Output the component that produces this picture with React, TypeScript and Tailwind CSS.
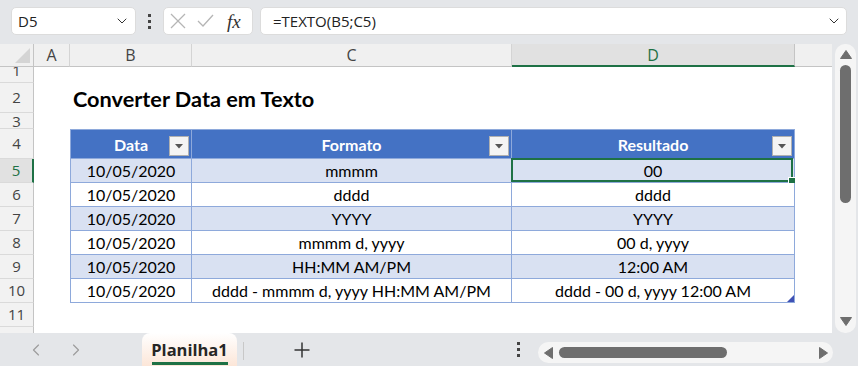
import { ChevronDown, ChevronLeft, ChevronRight } from "lucide-react";

// Planilha: converter data em texto
const dados = [
  ["10/05/2020", "mmmm", "00"],
  ["10/05/2020", "dddd", "dddd"],
  ["10/05/2020", "YYYY", "YYYY"],
  ["10/05/2020", "mmmm d, yyyy", "00 d, yyyy"],
  ["10/05/2020", "HH:MM AM/PM", "12:00 AM"],
  ["10/05/2020", "dddd - mmmm d, yyyy HH:MM AM/PM", "dddd - 00 d, yyyy 12:00 AM"],
];

function VDots() {
  return (
    <div className="flex flex-col gap-[3px]">
      <span className="w-[3px] h-[3px] bg-[#444]" />
      <span className="w-[3px] h-[3px] bg-[#444]" />
      <span className="w-[3px] h-[3px] bg-[#444]" />
    </div>
  );
}

function FormulaBar() {
  return (
    <div className="h-[44px] flex items-start pt-[7px]">
      <div className="ml-[11px] w-[125px] h-[28px] bg-white rounded-[5px] border border-[#dcdcdc] flex items-center justify-between pl-[6px] pr-[5px]">
        <span className="text-[15px] text-[#222]">D5</span>
        <ChevronDown size={16} strokeWidth={1.5} className="text-[#333]" />
      </div>
      <div className="w-[27px] h-[28px] flex items-center justify-center">
        <VDots />
      </div>
      <div className="w-[90px] h-[28px] bg-white rounded-[5px] border border-[#dcdcdc] flex items-center">
        <svg width="16" height="16" className="ml-[6px]">
          <line x1="1" y1="1" x2="15" y2="15" stroke="#b5b5b5" strokeWidth="1.3" />
          <line x1="15" y1="1" x2="1" y2="15" stroke="#b5b5b5" strokeWidth="1.3" />
        </svg>
        <svg width="17" height="14" className="ml-[11px]">
          <polyline points="1,7 6,12 16,1" fill="none" stroke="#b5b5b5" strokeWidth="1.3" />
        </svg>
        <span className="ml-[13px] font-['Liberation_Serif',serif] italic text-[19px] text-[#333] leading-none">fx</span>
      </div>
      <div className="ml-[7px] w-[587px] h-[28px] bg-white rounded-[5px] border border-[#dcdcdc] flex items-center justify-between pl-[12px] pr-[4px]">
        <span className="text-[15px] text-[#222]">=TEXTO(B5;C5)</span>
        <ChevronDown size={16} strokeWidth={1.5} className="text-[#333]" />
      </div>
    </div>
  );
}

function ColHeaders() {
  return (
    <div className="flex h-[23px] bg-[#f0f0f0] text-[16px] text-[#444]">
      <div className="w-[34px] relative border-r border-b border-[#c4c4c4]">
        <svg width="34" height="22" className="absolute left-0 top-0">
          <polygon points="15,19 30,4 30,19" fill="#d4d4d4" />
        </svg>
      </div>
      <div className="w-[36px] flex items-center justify-center border-r border-b border-r-[#d4d4d4] border-b-[#c4c4c4]">A</div>
      <div className="w-[122px] flex items-center justify-center border-r border-b border-r-[#d4d4d4] border-b-[#c4c4c4]">B</div>
      <div className="w-[320px] flex items-center justify-center border-r border-b border-r-[#d4d4d4] border-b-[#c4c4c4]">C</div>
      <div className="w-[283px] flex items-center justify-center bg-[#e1e1e1] text-[#1e7145] border-r border-r-[#c4c4c4] border-b-2 border-b-[#1e7145]">D</div>
      <div className="flex-1 border-b border-[#c4c4c4]" />
    </div>
  );
}

function RowHead({ n, h, sel, label }: { n?: number; h: string; sel?: boolean; label?: string }) {
  return (
    <div
      className={
        "w-[34px] shrink-0 overflow-hidden flex justify-center text-[15px] border-b border-b-[#dadada] " +
        h +
        " " +
        (label ?? "items-center") +
        (sel ? " bg-[#e1e1e1] text-[#1e7145] border-r-2 border-r-[#1e7145]" : " bg-[#f2f2f2] text-[#444] border-r border-r-[#c4c4c4]")
      }
    >
      {n}
    </div>
  );
}

function FilterBtn() {
  return (
    <div className="absolute right-[2px] bottom-[2px] w-[20px] h-[20px] bg-[#f4f4f4] border border-[#b0b0b0] flex items-center justify-center">
      <svg width="8" height="5">
        <polygon points="0,0 8,0 4,4.5" fill="#555" />
      </svg>
    </div>
  );
}

function Sheet() {
  return (
    <div className="w-[832px] bg-white flex flex-col overflow-hidden font-['Lato',sans-serif]">
      <div className="font-['Open_Sans',sans-serif]">
        <ColHeaders />
      </div>
      {/* linha 1 */}
      <div className="flex h-[16px] font-['Open_Sans',sans-serif]">
        <RowHead n={1} h="h-[16px]" label="items-start leading-[7px]" />
      </div>
      {/* linha 2: titulo */}
      <div className="flex h-[30px]">
        <div className="font-['Open_Sans',sans-serif]">
          <RowHead n={2} h="h-[30px]" />
        </div>
        <div className="w-[36px]" />
        <div className="pl-[3px] flex items-center pt-[2px] whitespace-nowrap text-[21.7px] font-bold text-black">
          Converter Data em Texto
        </div>
      </div>
      {/* linha 3 */}
      <div className="flex h-[16px] font-['Open_Sans',sans-serif]">
        <RowHead n={3} h="h-[16px]" label="items-center leading-[12px]" />
      </div>
      {/* linha 4: cabecalho da tabela */}
      <div className="flex h-[30px] text-[16px] font-bold text-white">
        <div className="font-['Open_Sans',sans-serif] font-normal">
          <RowHead n={4} h="h-[30px]" />
        </div>
        <div className="w-[36px]" />
        <div className="w-[122px] relative bg-[#4472c4] border border-[#8ea9db] flex items-center justify-center pt-[2px]">
          Data
          <FilterBtn />
        </div>
        <div className="w-[320px] relative bg-[#4472c4] border-y border-r border-[#8ea9db] flex items-center justify-center pt-[2px]">
          Formato
          <FilterBtn />
        </div>
        <div className="w-[283px] relative bg-[#4472c4] border-y border-r border-[#8ea9db] flex items-center justify-center pt-[2px]">
          Resultado
          <FilterBtn />
        </div>
      </div>
      {/* linhas 5 a 10 */}
      {dados.map((r, i) => {
        const bg = i % 2 === 0 ? "bg-[#d9e1f2]" : "bg-white";
        return (
          <div key={i} className="flex h-[24px] text-[16px] text-black">
            <div className="font-['Open_Sans',sans-serif]">
              <RowHead n={i + 5} h="h-[24px]" sel={i === 0} />
            </div>
            <div className="w-[36px]" />
            <div className={"w-[122px] border-l border-r border-b border-[#8ea9db] flex items-center justify-center " + bg}>
              {r[0]}
            </div>
            <div className={"w-[320px] border-r border-b border-[#8ea9db] flex items-center justify-center " + bg}>
              {r[1]}
            </div>
            <div className={"w-[283px] relative border-r border-b border-[#8ea9db] flex items-center justify-center " + bg}>
              {r[2]}
              {i === 0 && (
                <div className="absolute -left-[1px] -top-[1px] right-[1px] bottom-0 border-2 border-[#1e7145]">
                  <div className="absolute -right-[4px] -bottom-[4px] w-[6px] h-[6px] bg-[#1e7145] outline outline-1 outline-white" />
                </div>
              )}
              {i === dados.length - 1 && (
                <svg width="7" height="7" className="absolute right-0 bottom-0">
                  <polygon points="7,0 7,7 0,7" fill="#3f51b5" />
                </svg>
              )}
            </div>
          </div>
        );
      })}
      {/* linha 11 e começo da 12 */}
      <div className="flex h-[24px] font-['Open_Sans',sans-serif]">
        <RowHead n={11} h="h-[24px]" />
      </div>
      <div className="flex h-[24px]">
        <RowHead h="h-[24px]" />
      </div>
    </div>
  );
}

function VScroll() {
  return (
    <div className="w-[26px] pl-[3px]">
      <div className="w-[21px] h-[289px] rounded-[10px] bg-[#f5f5f5] flex flex-col items-center pt-[6px] pb-[7px]">
        <svg width="12" height="9">
          <polygon points="6,0.5 11.5,8.5 0.5,8.5" fill="#6e6e6e" stroke="#6e6e6e" strokeLinejoin="round" />
        </svg>
        <div className="mt-[6px] w-[11px] h-[138px] rounded-full bg-[#6e6e6e]" />
        <div className="flex-1" />
        <svg width="12" height="9">
          <polygon points="0.5,0.5 11.5,0.5 6,8.5" fill="#6e6e6e" stroke="#6e6e6e" strokeLinejoin="round" />
        </svg>
      </div>
    </div>
  );
}

function SheetTabs() {
  return (
    <div className="h-[33px] flex items-stretch">
      <div className="w-[142px] flex items-center">
        <ChevronLeft size={20} strokeWidth={1.4} className="ml-[26px] text-[#9c9c9c]" />
        <ChevronRight size={20} strokeWidth={1.4} className="ml-[20px] text-[#9c9c9c]" />
      </div>
      <div className="w-[95px] rounded-t-[8px] bg-gradient-to-b from-white to-[#fce6d8] flex flex-col items-center">
        <span className="mt-[6px] text-[16.5px] font-bold text-[#262626] leading-[22px]">Planilha1</span>
        <span className="mt-[1px] w-[76px] h-[3px] bg-[#1e7145]" />
      </div>
      <div className="ml-[6px] mt-[9px] mb-[6px] w-px bg-[#c8c8c8]" />
      <div className="ml-[50px] flex items-center">
        <svg width="16" height="16">
          <line x1="8" y1="0.5" x2="8" y2="15.5" stroke="#333" strokeWidth="1.5" />
          <line x1="0.5" y1="8" x2="15.5" y2="8" stroke="#333" strokeWidth="1.5" />
        </svg>
      </div>
      <div className="ml-[207px] flex items-center">
        <VDots />
      </div>
      <div className="ml-[18px] mt-[9px] w-[295px] h-[21px] rounded-full bg-[#f5f5f5] flex items-center pl-[6px] pr-[5px]">
        <svg width="9" height="12">
          <polygon points="0.5,6 8.5,0.5 8.5,11.5" fill="#6e6e6e" stroke="#6e6e6e" strokeLinejoin="round" />
        </svg>
        <div className="ml-[6px] w-[168px] h-[11px] rounded-full bg-[#6e6e6e]" />
        <div className="flex-1" />
        <svg width="9" height="12">
          <polygon points="0.5,0.5 8.5,6 0.5,11.5" fill="#6e6e6e" stroke="#6e6e6e" strokeLinejoin="round" />
        </svg>
      </div>
    </div>
  );
}

export default function App() {
  return (
    <div className="w-[858px] h-[366px] overflow-hidden bg-[#e4e6e9] flex flex-col font-['Open_Sans',sans-serif]">
      <FormulaBar />
      <div className="flex h-[289px]">
        <Sheet />
        <VScroll />
      </div>
      <SheetTabs />
    </div>
  );
}
